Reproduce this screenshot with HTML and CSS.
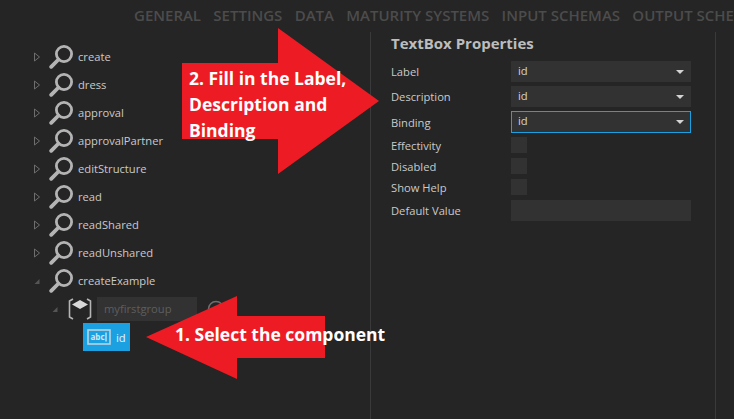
FILE: index.html
```html
<!DOCTYPE html>
<html lang="en">
<head>
  <meta charset="UTF-8">
  <meta name="viewport" content="width=device-width, initial-scale=1.0">
  <title>TextBox Properties</title>
  <link rel="stylesheet" href="styles.css">
</head>
<body>
  <svg class="defs" width="0" height="0">
    <symbol id="lens" viewBox="0 0 24 24">
      <circle cx="15" cy="9" r="7.6" fill="none" stroke="#b4b4b4" stroke-width="2.8"/>
      <path d="M9.500 14.500 2.200 21.800" fill="none" stroke="#b4b4b4" stroke-width="3.800" stroke-linecap="round"/>
    </symbol>
    <symbol id="closed" viewBox="0 0 8 10">
      <path d="M1.500 1v8L6.500 5z" fill="none" stroke="#6e6e6e" stroke-width="1"/>
    </symbol>
    <symbol id="open" viewBox="0 0 8 10">
      <path d="M6.500 3v5h-5z" fill="#555"/>
    </symbol>
  </svg>

  <nav class="tabs">
    <span>GENERAL</span>
    <span>SETTINGS</span>
    <span>DATA</span>
    <span>MATURITY SYSTEMS</span>
    <span>INPUT SCHEMAS</span>
    <span>OUTPUT SCHEMAS</span>
  </nav>

  <div class="main">
    <div class="tree">
      <div class="node"><svg class="arrow"><use href="#closed"/></svg><svg class="lens"><use href="#lens"/></svg><span>create</span></div>
      <div class="node"><svg class="arrow"><use href="#closed"/></svg><svg class="lens"><use href="#lens"/></svg><span>dress</span></div>
      <div class="node"><svg class="arrow"><use href="#closed"/></svg><svg class="lens"><use href="#lens"/></svg><span>approval</span></div>
      <div class="node"><svg class="arrow"><use href="#closed"/></svg><svg class="lens"><use href="#lens"/></svg><span>approvalPartner</span></div>
      <div class="node"><svg class="arrow"><use href="#closed"/></svg><svg class="lens"><use href="#lens"/></svg><span>editStructure</span></div>
      <div class="node"><svg class="arrow"><use href="#closed"/></svg><svg class="lens"><use href="#lens"/></svg><span>read</span></div>
      <div class="node"><svg class="arrow"><use href="#closed"/></svg><svg class="lens"><use href="#lens"/></svg><span>readShared</span></div>
      <div class="node"><svg class="arrow"><use href="#closed"/></svg><svg class="lens"><use href="#lens"/></svg><span>readUnshared</span></div>
      <div class="node"><svg class="arrow"><use href="#open"/></svg><svg class="lens"><use href="#lens"/></svg><span>createExample</span></div>

      <div class="node group">
        <svg class="arrow"><use href="#open"/></svg>
        <svg class="cube" viewBox="0 0 24 24">
          <path d="M5 2 1.500 4v16L5 22M19 2l3.500 2v16L19 22" fill="none" stroke="#b4b4b4" stroke-width="1.600"/>
          <path d="M12 3 20 7.500 12 12 4 7.500z" fill="#d8d8d8"/>
        </svg>
        <div class="group-name">myfirstgroup</div>
        <svg class="help" viewBox="0 0 18 18"><circle cx="9" cy="9" r="7.500" fill="none" stroke="#6e6e6e" stroke-width="1.500"/></svg>
      </div>

      <div class="component">
        <svg class="abc" viewBox="0 0 24 16">
          <rect x="1" y="1" width="22" height="14" fill="none" stroke="#b9d3e4" stroke-width="1.600"/>
          <text x="3.500" y="11" class="abc-text">abc</text>
          <path d="M19 3.500v9" stroke="#fff" stroke-width="1"/>
        </svg>
        <span>id</span>
      </div>
    </div>

    <div class="props">
      <h2>TextBox Properties</h2>
      <div class="prop prop-select"><label>Label</label><div class="select">id<i></i></div></div>
      <div class="prop prop-select"><label>Description</label><div class="select">id<i></i></div></div>
      <div class="prop prop-select"><label>Binding</label><div class="select focused">id<i></i></div></div>
      <div class="prop prop-check"><label>Effectivity</label><div class="check"></div></div>
      <div class="prop prop-check"><label>Disabled</label><div class="check"></div></div>
      <div class="prop prop-check"><label>Show Help</label><div class="check"></div></div>
      <div class="prop prop-text"><label>Default Value</label><div class="select"></div></div>
    </div>
  </div>

  <!-- red annotations on top of the screenshot -->
  <svg class="callouts" width="734" height="419">
    <polygon points="182,63 278,63 278,28 379,101 278,174 278,139 182,139" fill="#ed1c24"/>
    <polygon points="146,337 237,296 237,316 325,316 325,358 237,358 237,379" fill="#ed1c24"/>
  </svg>
  <div class="note note-fill">2. Fill in the Label,<br>Description and<br>Binding</div>
  <div class="note note-select">1. Select the component</div>
</body>
</html>
```

FILE: styles.css
```css
* {
  margin: 0;
  padding: 0;
  box-sizing: border-box;
}

body {
  width: 734px;
  height: 419px;
  overflow: hidden;
  position: relative;
  background: #252525;
  color: #cacaca;
  font-family: "Open Sans", "Noto Sans", sans-serif;
  font-size: 11.2px;
}

.defs {
  position: absolute;
}

.tabs {
  height: 32px;
  padding: 5px 0 0 134px;
  display: flex;
  gap: 12.300px;
  white-space: nowrap;
  overflow: hidden;
  font-size: 15px;
  line-height: 20px;
  font-weight: 600;
  color: #4c4c4c;
}

.main {
  display: flex;
  height: 387px;
}

.tree {
  width: 371px;
  flex: none;
  padding: 11px 0 0 33px;
  border-right: 1px solid #3a3a3a;
}

.node {
  height: 28px;
  display: flex;
  align-items: center;
}

.node > span {
  margin-bottom: 2px;
}

.arrow {
  width: 8px;
  height: 10px;
  flex: none;
}

.lens {
  width: 24px;
  height: 24px;
  margin: 0 5px 0 8px;
  flex: none;
}

.group {
  padding-left: 18px;
}

.cube {
  width: 24px;
  height: 24px;
  margin: 0 5px 0 9px;
  flex: none;
}

.group-name {
  width: 100px;
  height: 24px;
  padding-left: 7px;
  line-height: 23px;
  background: #323232;
  color: #5e5e5e;
}

.help {
  width: 18px;
  height: 18px;
  margin-left: 10px;
}

.component {
  width: 47px;
  height: 28px;
  margin-left: 50px;
  padding-left: 4px;
  display: flex;
  align-items: center;
  background: #1ba1e2;
  color: #e8f4fb;
}

.abc {
  width: 24px;
  height: 16px;
  margin-right: 5px;
  flex: none;
}

.abc-text {
  font-size: 8px;
  font-weight: 700;
  fill: #d6e6f0;
}

.props {
  width: 345px;
  height: 100%;
  flex: none;
  padding-left: 20px;
  border-right: 1px solid #3a3a3a;
}

.props h2 {
  height: 27px;
  font-size: 15px;
  line-height: 23px;
  font-weight: 700;
  color: #bdbdbd;
}

.prop {
  display: flex;
  align-items: center;
}

.prop label {
  width: 120px;
  flex: none;
}

.prop-select {
  height: 25.300px;
}

.prop-check {
  height: 21px;
}

.prop-check label,
.prop-text label {
  padding-top: 1px;
}

.prop-text {
  height: 25px;
}

.select {
  width: 180px;
  height: 21px;
  padding-left: 7px;
  position: relative;
  line-height: 19px;
  background: #323232;
  color: #d4d4d4;
}

.select i {
  position: absolute;
  right: 7px;
  top: 9px;
  border: 4px solid transparent;
  border-bottom: 0;
  border-top-color: #d4d4d4;
}

.focused {
  height: 22px;
  outline: 1px solid #1ba1e2;
  outline-offset: -1px;
}

.check {
  width: 16px;
  height: 16px;
  background: #323232;
}

.callouts {
  position: absolute;
  left: 0;
  top: 0;
}

.note {
  position: absolute;
  font-size: 17.500px;
  font-weight: 700;
  color: #fff;
  white-space: nowrap;
}

.note-fill {
  left: 189px;
  top: 65px;
  line-height: 26px;
}

.note-select {
  left: 175px;
  top: 323px;
  line-height: 22px;
}
```
